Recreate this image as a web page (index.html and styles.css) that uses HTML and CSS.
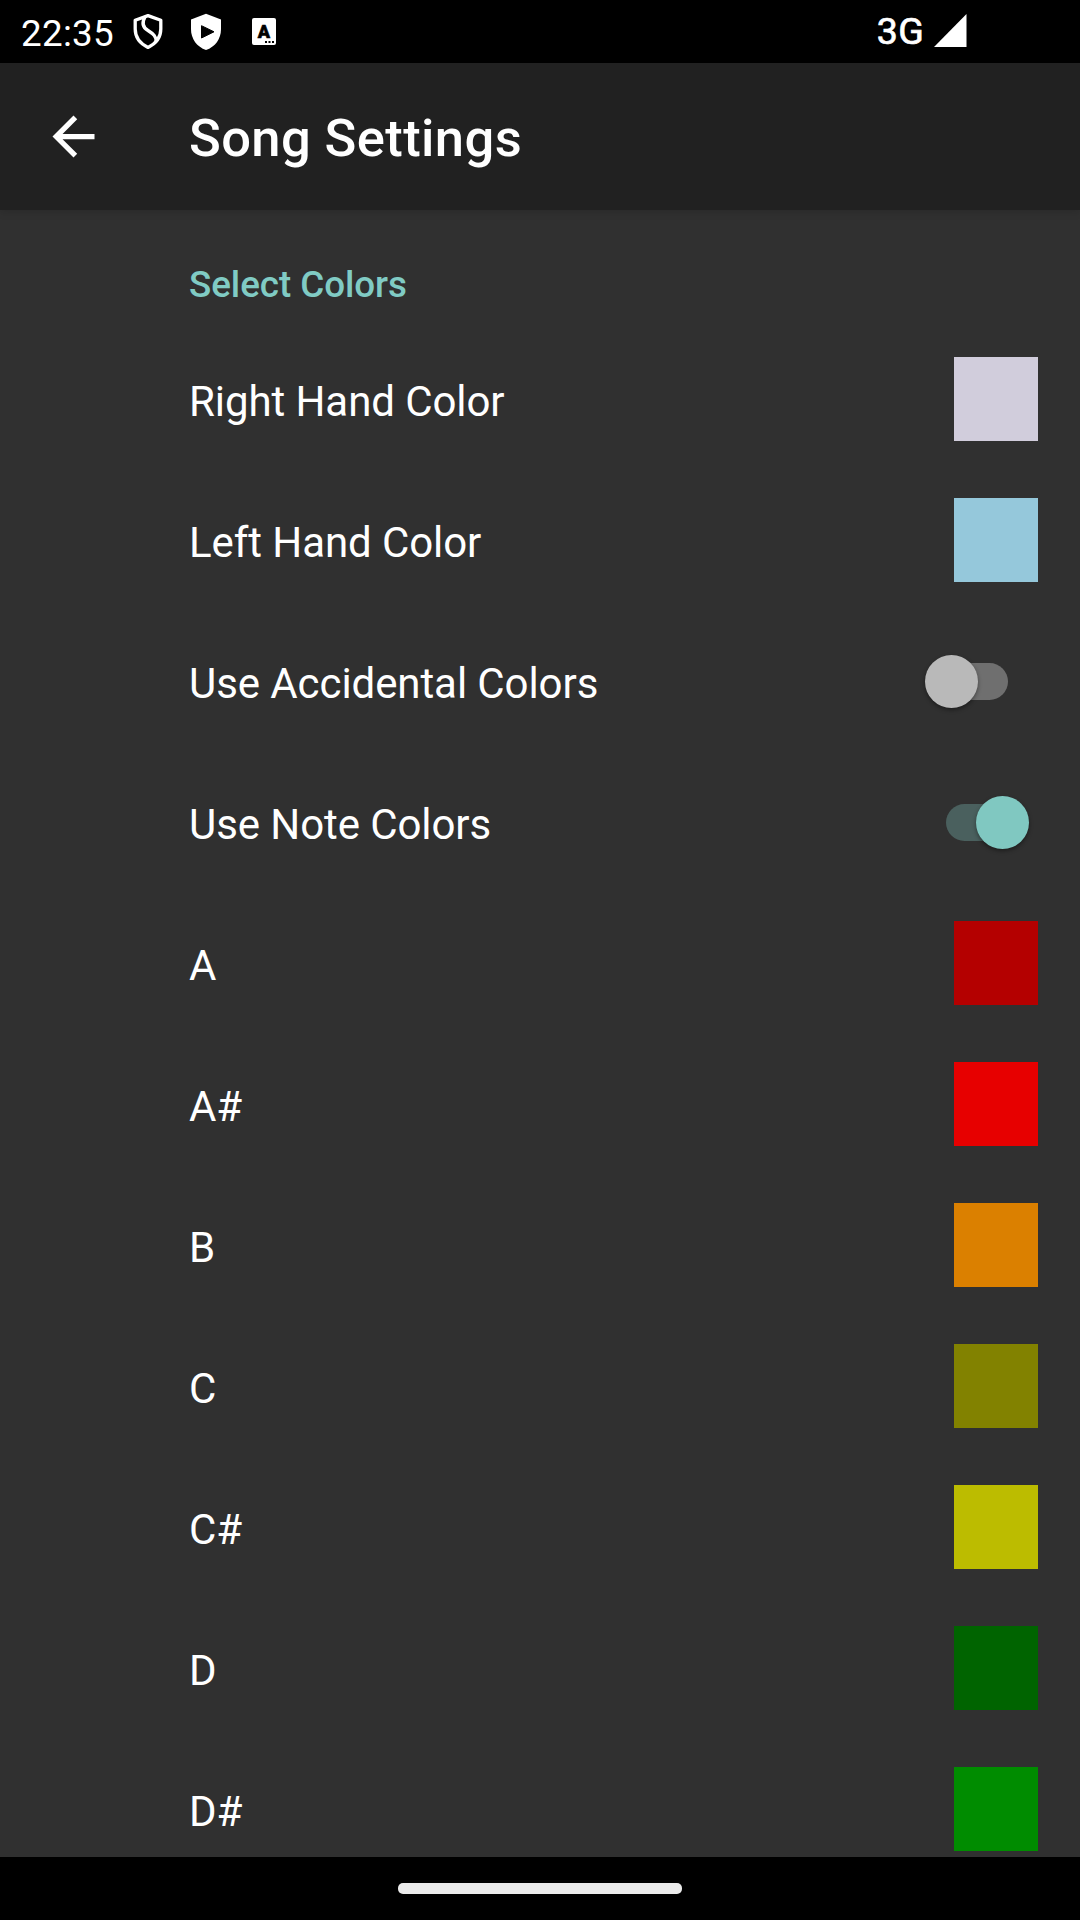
FILE: index.html
```html
<!DOCTYPE html>
<html lang="en">
<head>
<meta charset="utf-8">
<title>Song Settings</title>
<link rel="stylesheet" href="styles.css">
</head>
<body>
<div class="screen">
  <div class="status-bar">
    <span class="clock">22:35</span>
    <svg class="status-icon shield-s" width="32" height="38" viewBox="0 0 32 38" fill="none" stroke="#fff" stroke-width="3.300" stroke-linejoin="round">
      <path d="M16 2.600 L28.800 7.200 V16 C28.800 25 23 31 16 34.400 C9 31 3.200 25 3.200 16 V7.200 Z"/>
      <path d="M13 4 C9.500 10 11 14.500 16 17.500 C21.500 21 24.500 23.500 24 28.500"/>
    </svg>
    <svg class="status-icon shield-play" width="32" height="38" viewBox="0 0 32 38">
      <path fill="#fff" d="M16 .8 L31 6.500 V16 C31 26 25 34 16 37 C7 34 1 26 1 16 V6.500 Z"/>
      <path stroke="#000" stroke-linejoin="round" d="M11.500 12.700 V25 L24 18.800 Z"/>
    </svg>
    <svg class="status-icon letter-card" width="24" height="27" viewBox="0 0 24 27">
      <rect width="24" height="27" rx="2" fill="#fff"/>
      <text class="card-letter" x="12" y="19.500" text-anchor="middle">A</text>
      <path d="M13 23h2v2h-2zM16.500 23h2v2h-2zM20 23h2v2h-2z"/>
    </svg>
    <span class="network">3G</span>
    <svg class="signal" width="33" height="33" viewBox="0 0 33 33"><path fill="#fff" d="M32.500 0V33H0Z"/></svg>
  </div>
  <header class="app-bar">
    <svg class="back" width="63" height="63" viewBox="0 0 24 24"><path fill="#fff" d="M20 11H7.830l5.590-5.590L12 4l-8 8 8 8 1.410-1.410L7.830 13H20v-2z"/></svg>
    <h1 class="title">Song Settings</h1>
  </header>
  <main class="content">
    <h2 class="category">Select Colors</h2>
    <ul class="list">
      <li class="row"><span class="label">Right Hand Color</span><span class="swatch right-hand"></span></li>
      <li class="row"><span class="label">Left Hand Color</span><span class="swatch left-hand"></span></li>
      <li class="row"><span class="label">Use Accidental Colors</span><span class="switch off"><span class="thumb"></span></span></li>
      <li class="row"><span class="label">Use Note Colors</span><span class="switch on"><span class="thumb"></span></span></li>
      <li class="row"><span class="label">A</span><span class="swatch note-a"></span></li>
      <li class="row"><span class="label">A#</span><span class="swatch note-a-sharp"></span></li>
      <li class="row"><span class="label">B</span><span class="swatch note-b"></span></li>
      <li class="row"><span class="label">C</span><span class="swatch note-c"></span></li>
      <li class="row"><span class="label">C#</span><span class="swatch note-c-sharp"></span></li>
      <li class="row"><span class="label">D</span><span class="swatch note-d"></span></li>
      <li class="row"><span class="label">D#</span><span class="swatch note-d-sharp"></span></li>
    </ul>
  </main>
  <footer class="nav-bar"><span class="pill"></span></footer>
</div>
</body>
</html>
```
FILE: styles.css
```css
* { box-sizing: border-box; margin: 0; padding: 0; }
body { background: #000; font-family: Roboto, sans-serif; color: #fff; }
.screen { width: 1080px; height: 1920px; display: flex; flex-direction: column; overflow: hidden; }

.status-bar { height: 63px; flex: none; display: flex; align-items: flex-start; padding-left: 21px; background: #000; }
.clock { width: 113px; flex: none; font-size: 36.75px; line-height: 43px; padding-top: 12px; letter-spacing: .3px; }
.shield-s { margin: 13px 0 0 -2px; }
.shield-play { margin: 13px 0 0 26px; }
.letter-card { margin: 18px 0 0 30px; }
.card-letter { font: 900 18px Roboto, sans-serif; stroke: #000; stroke-width: .6px; }
.network { margin-left: auto; font-size: 37.5px; font-weight: 400; line-height: 43px; padding-top: 10px; letter-spacing: .3px; -webkit-text-stroke: .7px #fff; }
.signal { margin: 14px 113px 0 10px; }

.app-bar { height: 147px; flex: none; display: flex; align-items: center; padding-left: 42px; gap: 84px; background: #212121; box-shadow: 0 2px 8px rgba(0, 0, 0, .15); z-index: 1; }
.title { font-size: 52.5px; font-weight: 500; line-height: 62px; padding-top: 2px; letter-spacing: .4px; }

.content { flex: 1; min-height: 0; overflow: hidden; background: #303030; }
.category { height: 118px; padding: 53px 0 0 189px; font-size: 36.75px; font-weight: 500; line-height: 43px; letter-spacing: -.05px; color: #80cbc4; }
.list { list-style: none; }
.row { height: 141px; display: flex; align-items: center; justify-content: space-between; padding: 0 42px 0 189px; }
.label { font-size: 42px; line-height: 50px; padding-top: 7px; letter-spacing: -.08px; }
.swatch { width: 84px; height: 84px; }
.right-hand { background: #d1cddc; }
.left-hand { background: #95c8db; }
.note-a { background: #b40000; }
.note-a-sharp { background: #e70000; }
.note-b { background: #db8000; }
.note-c { background: #828200; }
.note-c-sharp { background: #bcbc00; }
.note-d { background: #006400; }
.note-d-sharp { background: #008c00; }

.switch { width: 78px; height: 37px; border-radius: 19px; display: flex; align-items: center; margin-top: 2px; }
.switch.off { background: #6f6f6f; margin-right: 30px; }
.switch.on { background: #4a605e; margin-right: 14px; justify-content: flex-end; }
.thumb { width: 53px; height: 53px; flex: none; border-radius: 50%; box-shadow: 0 2px 4px rgba(0, 0, 0, .4); }
.off .thumb { background: #b9b9b9; margin-left: -5px; }
.on .thumb { background: #80c8c1; margin-right: -5px; }

.nav-bar { height: 63px; flex: none; display: flex; justify-content: center; align-items: center; background: #000; }
.pill { width: 284px; height: 11px; border-radius: 5px; background: #ebebeb; }
```
